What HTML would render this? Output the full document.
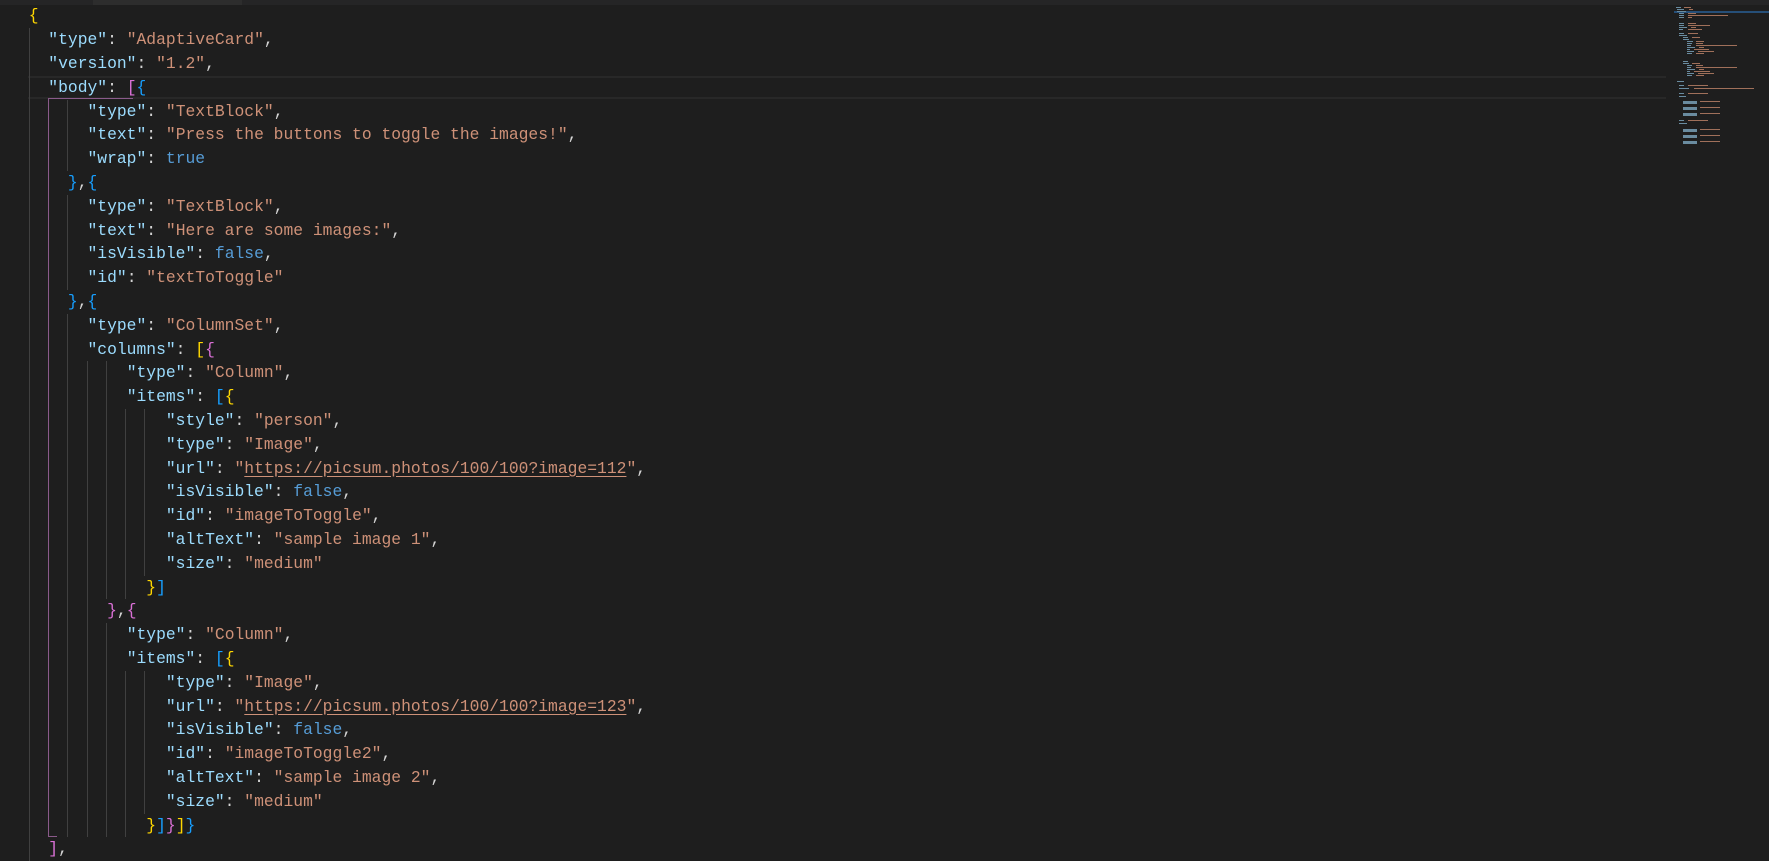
<!DOCTYPE html>
<html><head><meta charset="utf-8"><style>
body{margin:0;width:1769px;height:860px;background:#1e1e1e;overflow:hidden;position:relative;font-family:"Liberation Mono",monospace;font-size:16.33px}
.l{position:absolute;left:28.7px;height:23.8px;line-height:23.8px;white-space:pre;color:#d4d4d4}
.k{color:#9cdcfe}.s{color:#ce9178}.b{color:#569cd6}
.g{color:#ffd700}.p{color:#da70d6}.u{color:#179fff}
.ul{text-decoration:underline;text-underline-offset:3px}
.v{position:absolute;width:1px;background:#404040}
</style></head><body>
<div style="position:absolute;left:0;top:0;width:1769px;height:5px;background:#252526"></div>
<div style="position:absolute;left:93px;top:0;width:149px;height:5px;background:#2d2d2d"></div>
<div style="position:absolute;left:28px;top:76px;width:1638px;height:23px;border-top:2px solid #282828;border-bottom:2px solid #282828;box-sizing:border-box"></div>
<div class="v" style="left:29px;top:28.2px;height:833px"></div>
<div class="v" style="left:67px;top:99.6px;height:71.4px"></div>
<div class="v" style="left:67px;top:194.8px;height:95.2px"></div>
<div class="v" style="left:67px;top:313.8px;height:523.6px"></div>
<div class="v" style="left:87px;top:361.4px;height:476px"></div>
<div class="v" style="left:106px;top:361.4px;height:238px"></div>
<div class="v" style="left:106px;top:623.2px;height:214px"></div>
<div class="v" style="left:125px;top:409px;height:190.4px"></div>
<div class="v" style="left:125px;top:670.8px;height:166.6px"></div>
<div class="v" style="left:144px;top:409px;height:166.6px"></div>
<div class="v" style="left:144px;top:670.8px;height:142.8px"></div>
<div style="position:absolute;left:48px;top:98px;width:85px;height:1px;background:#8a5a8a"></div>
<div style="position:absolute;left:48px;top:98px;width:1px;height:739px;background:#8a5a8a"></div>
<div style="position:absolute;left:48px;top:836px;width:9px;height:1px;background:#8a5a8a"></div>

<div class="l" style="top:4.4px"><span class="g">{</span></div>
<div class="l" style="top:28.2px">  <span class="k">"type"</span>: <span class="s">"AdaptiveCard"</span>,</div>
<div class="l" style="top:52px">  <span class="k">"version"</span>: <span class="s">"1.2"</span>,</div>
<div class="l" style="top:75.8px">  <span class="k">"body"</span>: <span class="p">[</span><span class="u">{</span></div>
<div class="l" style="top:99.6px">      <span class="k">"type"</span>: <span class="s">"TextBlock"</span>,</div>
<div class="l" style="top:123.4px">      <span class="k">"text"</span>: <span class="s">"Press the buttons to toggle the images!"</span>,</div>
<div class="l" style="top:147.2px">      <span class="k">"wrap"</span>: <span class="b">true</span></div>
<div class="l" style="top:171px">    <span class="u">}</span>,<span class="u">{</span></div>
<div class="l" style="top:194.8px">      <span class="k">"type"</span>: <span class="s">"TextBlock"</span>,</div>
<div class="l" style="top:218.6px">      <span class="k">"text"</span>: <span class="s">"Here are some images:"</span>,</div>
<div class="l" style="top:242.4px">      <span class="k">"isVisible"</span>: <span class="b">false</span>,</div>
<div class="l" style="top:266.2px">      <span class="k">"id"</span>: <span class="s">"textToToggle"</span></div>
<div class="l" style="top:290px">    <span class="u">}</span>,<span class="u">{</span></div>
<div class="l" style="top:313.8px">      <span class="k">"type"</span>: <span class="s">"ColumnSet"</span>,</div>
<div class="l" style="top:337.6px">      <span class="k">"columns"</span>: <span class="g">[</span><span class="p">{</span></div>
<div class="l" style="top:361.4px">          <span class="k">"type"</span>: <span class="s">"Column"</span>,</div>
<div class="l" style="top:385.2px">          <span class="k">"items"</span>: <span class="u">[</span><span class="g">{</span></div>
<div class="l" style="top:409px">              <span class="k">"style"</span>: <span class="s">"person"</span>,</div>
<div class="l" style="top:432.8px">              <span class="k">"type"</span>: <span class="s">"Image"</span>,</div>
<div class="l" style="top:456.6px">              <span class="k">"url"</span>: <span class="s">"<span class="ul">https://picsum.photos/100/100?image=112</span>"</span>,</div>
<div class="l" style="top:480.4px">              <span class="k">"isVisible"</span>: <span class="b">false</span>,</div>
<div class="l" style="top:504.2px">              <span class="k">"id"</span>: <span class="s">"imageToToggle"</span>,</div>
<div class="l" style="top:528px">              <span class="k">"altText"</span>: <span class="s">"sample image 1"</span>,</div>
<div class="l" style="top:551.8px">              <span class="k">"size"</span>: <span class="s">"medium"</span></div>
<div class="l" style="top:575.6px">            <span class="g">}</span><span class="u">]</span></div>
<div class="l" style="top:599.4px">        <span class="p">}</span>,<span class="p">{</span></div>
<div class="l" style="top:623.2px">          <span class="k">"type"</span>: <span class="s">"Column"</span>,</div>
<div class="l" style="top:647px">          <span class="k">"items"</span>: <span class="u">[</span><span class="g">{</span></div>
<div class="l" style="top:670.8px">              <span class="k">"type"</span>: <span class="s">"Image"</span>,</div>
<div class="l" style="top:694.6px">              <span class="k">"url"</span>: <span class="s">"<span class="ul">https://picsum.photos/100/100?image=123</span>"</span>,</div>
<div class="l" style="top:718.4px">              <span class="k">"isVisible"</span>: <span class="b">false</span>,</div>
<div class="l" style="top:742.2px">              <span class="k">"id"</span>: <span class="s">"imageToToggle2"</span>,</div>
<div class="l" style="top:766px">              <span class="k">"altText"</span>: <span class="s">"sample image 2"</span>,</div>
<div class="l" style="top:789.8px">              <span class="k">"size"</span>: <span class="s">"medium"</span></div>
<div class="l" style="top:813.6px">            <span class="g">}</span><span class="u">]</span><span class="p">}</span><span class="g">]</span><span class="u">}</span></div>
<div class="l" style="top:837.4px">  <span class="p">]</span>,</div>

<svg style="position:absolute;left:1674px;top:5px" width="95" height="145">
<rect x="0" y="6" width="95" height="2" fill="#264f78"/>
<g fill="#6a8ca0">
<rect x="2" y="2" width="5" height="1"/><rect x="3" y="4" width="7" height="1"/><rect x="3" y="6" width="9" height="1"/><rect x="5" y="8" width="5" height="1"/><rect x="5" y="10" width="5" height="1"/><rect x="5" y="12" width="5" height="1"/>
<rect x="5" y="18" width="5" height="1"/><rect x="5" y="20" width="5" height="1"/><rect x="5" y="22" width="8" height="1"/><rect x="5" y="24" width="4" height="1"/>
<rect x="5" y="28" width="5" height="1"/><rect x="5" y="30" width="8" height="1"/><rect x="9" y="32" width="5" height="1"/><rect x="9" y="34" width="6" height="1"/>
<rect x="13" y="36" width="6" height="1"/><rect x="13" y="38" width="5" height="1"/><rect x="13" y="40" width="4" height="1"/><rect x="13" y="42" width="8" height="1"/><rect x="13" y="44" width="3" height="1"/><rect x="13" y="46" width="7" height="1"/><rect x="13" y="48" width="5" height="1"/>
<rect x="9" y="56" width="5" height="1"/><rect x="9" y="58" width="6" height="1"/><rect x="13" y="60" width="5" height="1"/><rect x="13" y="62" width="4" height="1"/><rect x="13" y="64" width="8" height="1"/><rect x="13" y="66" width="3" height="1"/><rect x="13" y="68" width="7" height="1"/><rect x="13" y="70" width="5" height="1"/>
<rect x="3" y="76" width="7" height="1"/><rect x="5" y="80" width="5" height="1"/><rect x="5" y="83" width="10" height="1"/><rect x="5" y="88" width="5" height="1"/><rect x="5" y="91" width="7" height="1"/>
<rect x="9" y="96" width="14" height="3"/><rect x="9" y="102" width="14" height="3"/><rect x="9" y="108" width="14" height="3"/><rect x="5" y="115" width="5" height="1"/><rect x="5" y="118" width="8" height="1"/><rect x="9" y="124" width="14" height="3"/><rect x="9" y="130" width="14" height="3"/><rect x="9" y="136" width="14" height="3"/>
</g>
<g fill="#a0705a">
<rect x="10" y="2" width="7" height="1"/><rect x="15" y="4" width="4" height="1"/><rect x="14" y="8" width="8" height="1"/><rect x="14" y="10" width="40" height="1"/><rect x="14" y="12" width="4" height="1"/>
<rect x="14" y="18" width="8" height="1"/><rect x="14" y="20" width="22" height="1"/><rect x="17" y="22" width="5" height="1"/><rect x="14" y="24" width="14" height="1"/>
<rect x="14" y="28" width="10" height="1"/><rect x="18" y="32" width="8" height="1"/><rect x="22" y="36" width="8" height="1"/><rect x="22" y="38" width="7" height="1"/><rect x="22" y="40" width="41" height="1"/><rect x="25" y="42" width="5" height="1"/><rect x="20" y="44" width="15" height="1"/><rect x="24" y="46" width="16" height="1"/><rect x="22" y="48" width="8" height="1"/>
<rect x="18" y="58" width="8" height="1"/><rect x="22" y="60" width="7" height="1"/><rect x="22" y="62" width="41" height="1"/><rect x="25" y="64" width="5" height="1"/><rect x="20" y="66" width="16" height="1"/><rect x="24" y="68" width="16" height="1"/><rect x="22" y="70" width="8" height="1"/>
<rect x="14" y="80" width="20" height="1"/><rect x="20" y="83" width="60" height="1"/><rect x="14" y="88" width="20" height="1"/><rect x="26" y="96" width="20" height="1"/><rect x="26" y="102" width="20" height="1"/><rect x="26" y="108" width="20" height="1"/><rect x="14" y="115" width="20" height="1"/><rect x="26" y="124" width="20" height="1"/><rect x="26" y="130" width="20" height="1"/><rect x="26" y="136" width="20" height="1"/>
</g>
</svg>
</body></html>
